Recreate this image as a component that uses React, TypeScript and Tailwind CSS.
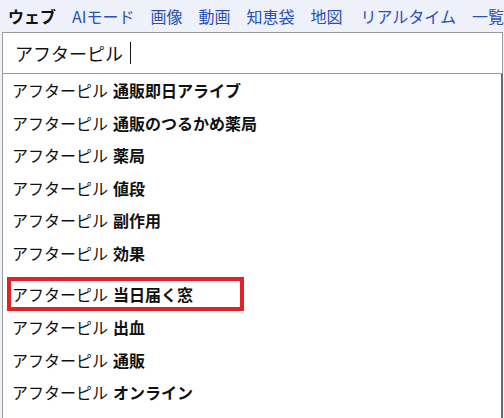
import React from "react";

const font = {
  fontFamily: '"Noto Sans CJK JP", "Noto Sans", sans-serif',
};

const suggestions = [
  "通販即日アライブ",
  "通販のつるかめ薬局",
  "薬局",
  "値段",
  "副作用",
  "効果",
  "当日届く窓",
  "出血",
  "通販",
  "オンライン",
];

export default function App() {
  return (
    <div
      className="w-[504px] h-[418px] overflow-hidden bg-[#eef1f9] text-[#111]"
      style={font}
    >
      <nav className="h-[32px] flex items-center gap-4 pl-2 text-[16px] leading-none whitespace-nowrap">
        <span className="font-bold text-[#111]">ウェブ</span>
        <span className="text-[#2a50b5]">AIモード</span>
        <span className="text-[#2a50b5]">画像</span>
        <span className="text-[#2a50b5]">動画</span>
        <span className="text-[#2a50b5]">知恵袋</span>
        <span className="text-[#2a50b5]">地図</span>
        <span className="text-[#2a50b5] ml-[2px]">リアルタイム</span>
        <span className="text-[#2a50b5]">一覧</span>
      </nav>
      <div className="ml-[2px] w-[501px] h-[42px] border border-[#9a9a9a] bg-white flex items-center pl-[12px] text-[18px] leading-none">
        <span>アフターピル</span>
        <span className="ml-[7px] w-px h-[22px] bg-[#111]" />
      </div>
      <div className="ml-[2px] w-[501px] h-[344px] bg-white border-l border-l-[#9a9a9a] border-r-2 border-r-[#6b6b6b] text-[16px] leading-none">
        {suggestions.map((s, i) =>
          i === 6 ? (
            <div key={s} className="mt-[8px] h-[34px] flex">
              <div className="ml-[4px] w-[237px] h-[34px] border-4 border-[#e3212a] flex items-center pl-[1px] whitespace-nowrap">
                <span className="mr-[5px]">アフターピル</span>
                <span className="font-bold">{s}</span>
              </div>
            </div>
          ) : (
            <div
              key={s}
              className="h-[32.5px] flex items-center pl-[9px] whitespace-nowrap"
            >
              <span className="mr-[5px]">アフターピル</span>
              <span className="font-bold">{s}</span>
            </div>
          )
        )}
      </div>
    </div>
  );
}
